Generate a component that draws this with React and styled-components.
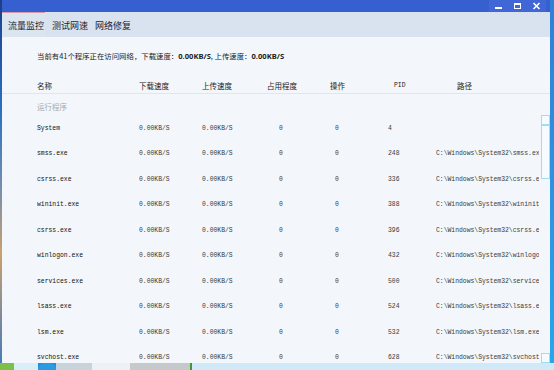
import styled, { createGlobalStyle } from 'styled-components'

const GlobalStyle = createGlobalStyle`
  html, body {
    margin: 0;
    padding: 0;
  }
  body {
    font-family: "Noto Sans CJK SC", "Noto Sans", sans-serif;
  }
`

const processes = [
  { name: 'System', pid: 4, path: '' },
  { name: 'smss.exe', pid: 248, path: 'C:\\Windows\\System32\\smss.exe' },
  { name: 'csrss.exe', pid: 336, path: 'C:\\Windows\\System32\\csrss.exe' },
  { name: 'wininit.exe', pid: 388, path: 'C:\\Windows\\System32\\wininit.exe' },
  { name: 'csrss.exe', pid: 396, path: 'C:\\Windows\\System32\\csrss.exe' },
  { name: 'winlogon.exe', pid: 432, path: 'C:\\Windows\\System32\\winlogon.exe' },
  { name: 'services.exe', pid: 500, path: 'C:\\Windows\\System32\\services.exe' },
  { name: 'lsass.exe', pid: 524, path: 'C:\\Windows\\System32\\lsass.exe' },
  { name: 'lsm.exe', pid: 532, path: 'C:\\Windows\\System32\\lsm.exe' },
  { name: 'svchost.exe', pid: 628, path: 'C:\\Windows\\System32\\svchost.exe' },
]

const Desktop = styled.div`
  width: 554px;
  height: 370px;
  overflow: hidden;
  display: flex;
  flex-direction: column;
  background: #1f8fe0;
`

const DesktopRow = styled.div`
  display: flex;
  height: 363px;
`

const LeftStrip = styled.div`
  width: 2px;
  background: linear-gradient(#1a3f8a 0%, #2c6fc0 30%, #6e8db0 50%, #c9a070 70%, #4a7ab8 100%);
`

const RightStrip = styled.div`
  flex: 1;
  background: linear-gradient(#2f7fd8, #27a6ec);
`

const Taskbar = styled.div`
  flex: 1;
  display: flex;
`

const TaskSegment = styled.div`
  width: ${({ w }) => w}px;
  flex: ${({ w }) => (w ? 'none' : 1)};
  background: ${({ color }) => color};
  border-radius: ${({ round }) => (round ? '8px 8px 0 0' : '0')};
`

const Window = styled.div`
  width: 548px;
  display: flex;
  flex-direction: column;
  background: #f3f7fb;
`

const TitleBar = styled.div`
  height: 12px;
  background: #3660cf;
  display: flex;
  justify-content: flex-end;
  align-items: center;
  padding-right: 4px;
`

const WinButton = styled.div`
  width: 19px;
  height: 12px;
  display: flex;
  align-items: center;
  justify-content: center;
  background: #4167d6;
`

const TabBar = styled.div`
  height: 25px;
  background: #d8e3ef;
  display: flex;
  align-items: stretch;
  gap: 7px;
`

const Tab = styled.div`
  display: flex;
  align-items: center;
  padding: ${({ active }) => (active ? '0 1px 0 6px' : '0')};
  font-size: 9px;
  color: #1e2430;
  border-top: 1px solid ${({ active }) => (active ? '#d99aa8' : 'transparent')};
  background: ${({ active }) => (active ? '#dbe5f0' : 'transparent')};
`

const Content = styled.div`
  flex: 1;
  position: relative;
  overflow: hidden;
`

const Status = styled.div`
  padding: 12px 0 0 35px;
  height: 14px;
  line-height: 14px;
  font-size: 7.4px;
  color: #1c1c1c;
  white-space: nowrap;

  b {
    font-family: "Noto Sans", sans-serif;
    font-weight: 700;
    font-size: 7.6px;
  }
`

const Grid = styled.div`
  display: grid;
  grid-template-columns: 102px 63px 65px 63px 58px 48px 1fr;
  align-items: center;
  padding: 0 11px 0 35px;
`

const HeaderRow = styled(Grid)`
  margin-top: 15px;
  height: 15px;
  border-bottom: 1px solid #dfe6ee;
  font-size: 7.5px;
  color: #222;
`

const HeadCell = styled.div`
  padding-left: ${({ indent }) => indent || 0}px;
  white-space: nowrap;
  font-family: ${({ mono }) => (mono ? '"Liberation Mono", monospace' : 'inherit')};
  font-size: ${({ mono }) => (mono ? '6.4px' : 'inherit')};
`

const GroupLabel = styled.div`
  padding: 4px 0 0 35px;
  height: 17.5px;
  line-height: 17.5px;
  font-size: 7.5px;
  color: #a5a9ae;
`

const Row = styled(Grid)`
  height: 25.5px;
  font-family: "Liberation Mono", monospace;
  font-size: 6.4px;
  color: #3a3a3a;
`

const Cell = styled.div`
  padding-left: ${({ indent }) => indent || 0}px;
  white-space: nowrap;
  overflow: hidden;
  color: ${({ strong }) => (strong ? '#111' : 'inherit')};
`

const Scrollbar = styled.div`
  position: absolute;
  right: 0;
  top: 78px;
  bottom: 0;
  width: 9px;
  display: flex;
  flex-direction: column;
`

const ScrollPart = styled.div`
  height: ${({ h }) => h}px;
  border: 1px solid #9fdcf6;
  box-sizing: border-box;
  background: #f5fbfe;
  margin-top: ${({ push }) => (push ? 'auto' : 0)};
`

const Minimize = () => (
  <svg width="9" height="8" viewBox="0 0 9 8">
    <rect x="1" y="5" width="7" height="2" fill="#fff" />
  </svg>
)

const Maximize = () => (
  <svg width="9" height="8" viewBox="0 0 9 8">
    <rect x="1.5" y="1.5" width="6" height="5" fill="none" stroke="#fff" />
    <rect x="1" y="1" width="7" height="2" fill="#fff" />
  </svg>
)

const Close = () => (
  <svg width="9" height="8" viewBox="0 0 9 8">
    <path d="M1.5 1 L7.5 7 M7.5 1 L1.5 7" stroke="#fff" strokeWidth="1.6" />
  </svg>
)

const App = () => {
  return (
    <>
      <GlobalStyle />
      <Desktop>
        <DesktopRow>
          <LeftStrip />
          <Window>
            <TitleBar>
              <WinButton><Minimize /></WinButton>
              <WinButton><Maximize /></WinButton>
              <WinButton><Close /></WinButton>
            </TitleBar>
            <TabBar>
              <Tab active>流量监控</Tab>
              <Tab>测试网速</Tab>
              <Tab>网络修复</Tab>
            </TabBar>
            <Content>
              <Status>
                当前有41个程序正在访问网络，下载速度：<b>0.00KB/S</b>, 上传速度：<b>0.00KB/S</b>
              </Status>
              <HeaderRow>
                <HeadCell>名称</HeadCell>
                <HeadCell>下载速度</HeadCell>
                <HeadCell>上传速度</HeadCell>
                <HeadCell>占用程度</HeadCell>
                <HeadCell>操作</HeadCell>
                <HeadCell indent={6} mono>PID</HeadCell>
                <HeadCell indent={21}>路径</HeadCell>
              </HeaderRow>
              <GroupLabel>运行程序</GroupLabel>
              {processes.map((p) => (
                <Row key={p.pid}>
                  <Cell strong>{p.name}</Cell>
                  <Cell>0.00KB/S</Cell>
                  <Cell>0.00KB/S</Cell>
                  <Cell indent={12}>0</Cell>
                  <Cell indent={5}>0</Cell>
                  <Cell>{p.pid}</Cell>
                  <Cell>{p.path}</Cell>
                </Row>
              ))}
              <Scrollbar>
                <ScrollPart h={10} />
                <ScrollPart h={54} />
                <ScrollPart h={10} push />
              </Scrollbar>
            </Content>
          </Window>
          <RightStrip />
        </DesktopRow>
        <Taskbar>
          <TaskSegment w={14} color="#7cc04a" />
          <TaskSegment w={24} color="#d8eef8" />
          <TaskSegment w={18} color="#2d9be0" round />
          <TaskSegment w={36} color="#c9d3da" />
          <TaskSegment w={38} color="#eef1f3" />
          <TaskSegment w={60} color="#c6c9cc" />
          <TaskSegment w={2} color="#3c9a2e" />
          <TaskSegment color="#cfe9f8" />
        </Taskbar>
      </Desktop>
    </>
  )
}

export default App
